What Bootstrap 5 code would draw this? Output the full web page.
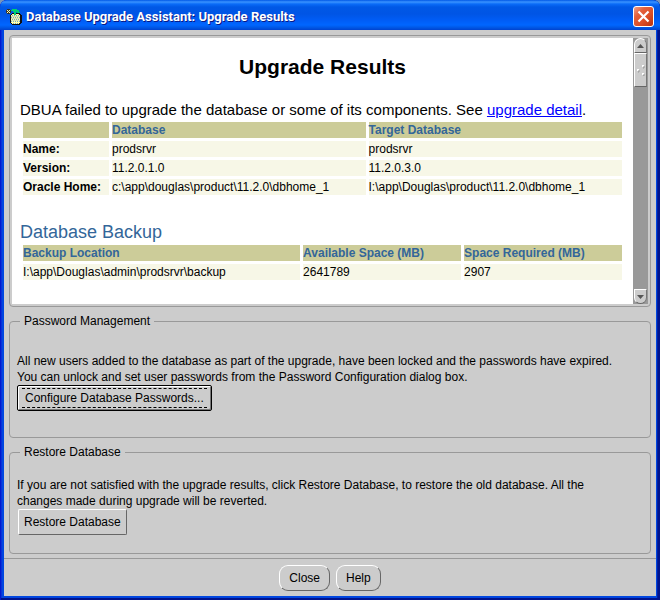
<!DOCTYPE html>
<html lang="en">
<head>
<meta charset="utf-8">
<meta name="viewport" content="width=device-width, initial-scale=1">
<title>Database Upgrade Assistant: Upgrade Results</title>
<link href="https://cdn.jsdelivr.net/npm/bootstrap@5.3.0/dist/css/bootstrap.min.css" rel="stylesheet">
<style>
  body { background: #7a96b8; font: 12px/16px "Liberation Sans", Arial, sans-serif; color: #000; }
  .app-window { background: #0046e0; border-radius: 7px 7px 0 0; overflow: hidden;
    padding: 0 4px 4px; box-shadow: inset 1px 0 #0019cf, inset -2px 0 #00138c, inset 0 -2px #00138c, inset 2px 0 #0831d9, inset -3px 0 #001ea0; }
  .title-bar { height: 30px; margin: 0 -4px; padding: 3px 6px 0 6px; color: #fff;
    background: linear-gradient(#0058e6 0, #3a93ff 2px, #0a6cf8 4px, #0058e6 7px, #0055e5 14px, #005cf5 20px, #0066ff 25px, #005bea 27px, #0043cf 30px); }
  .title-bar h1 { font: bold 13px/18px Roboto, sans-serif; text-shadow: 1px 1px #0a1883; }
  .close-x { width: 21px; height: 21px; border: 1px solid #fff; border-radius: 3px;
    background: linear-gradient(135deg, #f0a088 0, #e3603c 30%, #dd4f28 60%, #b93210 100%); }
  .client { background: #ccc; }
  .report { margin: 5px 5px 6px; border: 1px solid #999; border-radius: 4px; padding: 2px; }
  .page { background: #fff; padding: 16px 8px 0; }
  .page h2 { font-size: 21px; line-height: 26px; font-weight: bold; margin-bottom: 21px; }
  .page p { font-size: 15px; line-height: 18px; margin: 0; }
  .page a { color: #00f; }
  .page h3 { font-size: 18px; line-height: 19px; color: #369; margin: 25px 0 0; font-weight: 400; }
  .grid-table { width: 100%; border-collapse: separate; border-spacing: 3px; table-layout: fixed; }
  .grid-table th, .grid-table td { padding: 0; height: 16px; background: #f7f7e7; line-height: 16px; }
  .grid-table thead th { background: #cc9; color: #369; }
  .grid-table .c-label { width: 86px; }
  .grid-table .c-space { width: 158px; }
  .scroll-track { width: 15px; background: #999; }
  .scroll-btn { height: 15px; background: #ccc; border: 1px solid #fff; border-right-color: #777; border-bottom-color: #666; margin: 0 1px; }
  .scroll-up { border-radius: 7px 7px 0 0; }
  .scroll-down { border-radius: 0 0 7px 7px; }
  .thumb { height: 34px; background: #ccc; border: 1px solid #fff; border-right-color: #777; border-bottom-color: #666; margin: 0 1px; }
  .group { margin: 0 5px; border: 1px solid #999; border-radius: 4px; padding: 0 7px; }
  .group legend { font-size: 12px; line-height: 16px; margin: 0 0 0 3px; padding: 0 4px; }
  .g-pass { padding-bottom: 26px; margin-bottom: 6px; }
  .g-pass p { margin: 24px 0 0; }
  .g-rest { padding-bottom: 18px; margin-bottom: 4px; }
  .g-rest p { margin: 17px 0 0; }
  .push { background: #ccc; color: #000; border: 1px solid #fff; border-right-color: #666; border-bottom-color: #666; border-radius: 2px; font-size: 12px; line-height: 16px; padding: 4px; }
  .push-rest { margin-left: 1px; padding: 4px 5px; }
  .push-main { border-color: #000; padding: 2px 4px; box-shadow: inset 1px 1px #fff, inset -1px -1px #777; }
  .push-main span { display: block; border: dashed #000; border-width: 1px 0; padding: 1px 3px; }
  .push-round { border-radius: 9px; padding: 4px 9px; }
  .foot { border-top: 1px solid #999; padding: 6px 0 5px; gap: 6px; }
</style>
</head>
<body>
<div class="app-window min-vh-100 d-flex flex-column">
  <header class="title-bar d-flex align-items-center">
    <svg width="16" height="16" viewBox="0 0 16 16" shape-rendering="crispEdges" aria-hidden="true">
      <path fill="#111" d="M6 4h8v1h1v1h1v8h-1v1h-1v1H6v-1H5v-1H4V6h1V5h1z"/>
      <path fill="#ffffa8" d="M6 5h7v1h1v8h-1v1H6v-1H5V6h1z"/>
      <path fill="#70a8c8" d="M6 6h1v1H6zM8 6h1v1H8zM10 6h1v1h-1zM12 6h1v1h-1zM5 8h1v1H5zM7 8h1v1H7zM9 8h1v1H9zM11 8h1v1h-1zM13 8h1v1h-1zM6 10h1v1H6zM8 10h1v1H8zM10 10h1v1h-1zM12 10h1v1h-1zM5 12h1v1H5zM7 12h1v1H7zM9 12h1v1H9zM11 12h1v1h-1zM13 12h1v1h-1zM7 14h1v1H7zM9 14h1v1H9zM11 14h1v1h-1z"/>
      <path fill="#b8c8b8" d="M5 7h9v1H5zM5 9h9v1H5zM5 11h9v1H5z" opacity=".5"/>
      <path fill="#00d070" d="M6 0h5v1h2v2h1v1h-3V3h-1v3H8V3H7V2H5V1h1z"/>
      <path fill="#333" d="M1 0h3v1h1v3H4v1H1V4H0V1h1z"/>
      <path fill="#ffffb0" d="M1 1h1v1H1zM3 1h1v1H3zM2 2h1v1H2zM1 3h1v1H1zM3 3h1v1H3z"/>
    </svg>
    <h1 class="mb-0 ms-1 flex-grow-1">Database Upgrade Assistant: Upgrade Results</h1>
    <button class="close-x p-0 d-flex align-items-center justify-content-center" type="button" aria-label="Close window">
      <svg width="13" height="13" viewBox="0 0 13 13" aria-hidden="true"><path d="M1.500 1.500l10 10M11.500 1.500l-10 10" stroke="#fff" stroke-width="2.200"/></svg>
    </button>
  </header>
  <main class="client flex-grow-1 d-flex flex-column">
    <section class="report flex-grow-1 d-flex">
      <div class="page flex-grow-1">
        <h2 class="text-center">Upgrade Results</h2>
        <p>DBUA failed to upgrade the database or some of its components. See <a href="#">upgrade detail</a>.</p>
        <table class="grid-table">
          <thead><tr><th class="c-label"></th><th scope="col">Database</th><th scope="col">Target Database</th></tr></thead>
          <tbody>
            <tr><th scope="row">Name:</th><td>prodsrvr</td><td>prodsrvr</td></tr>
            <tr><th scope="row">Version:</th><td>11.2.0.1.0</td><td>11.2.0.3.0</td></tr>
            <tr><th scope="row">Oracle Home:</th><td>c:\app\douglas\product\11.2.0\dbhome_1</td><td>I:\app\Douglas\product\11.2.0\dbhome_1</td></tr>
          </tbody>
        </table>
        <h3>Database Backup</h3>
        <table class="grid-table">
          <thead><tr><th scope="col">Backup Location</th><th class="c-space" scope="col">Available Space (MB)</th><th class="c-space" scope="col">Space Required (MB)</th></tr></thead>
          <tbody><tr><td>I:\app\Douglas\admin\prodsrvr\backup</td><td>2641789</td><td>2907</td></tr></tbody>
        </table>
      </div>
      <div class="scroll-track d-flex flex-column flex-shrink-0">
        <button class="scroll-btn scroll-up p-0 d-flex align-items-center justify-content-center" type="button" aria-label="Scroll up">
          <svg width="7" height="4" viewBox="0 0 7 4" aria-hidden="true"><path d="M0 4l3.500-4L7 4z" fill="#555"/></svg>
        </button>
        <div class="thumb d-flex align-items-center justify-content-center">
          <svg width="9" height="11" viewBox="0 0 9 11" aria-hidden="true"><g fill="#fff"><path d="M6 0h2v2H6zM1 4h2v2H1zM6 8h2v2H6z"/></g><path d="M8 1v2H7M3 5v2H2M8 9v2H7" fill="none" stroke="#999"/></svg>
        </div>
        <button class="scroll-btn scroll-down mt-auto p-0 d-flex align-items-center justify-content-center" type="button" aria-label="Scroll down">
          <svg width="7" height="4" viewBox="0 0 7 4" aria-hidden="true"><path d="M0 0h7L3.500 4z" fill="#555"/></svg>
        </button>
      </div>
    </section>
    <fieldset class="group g-pass">
      <legend class="float-none w-auto">Password Management</legend>
      <p>All new users added to the database as part of the upgrade, have been locked and the passwords have expired.<br>You can unlock and set user passwords from the Password Configuration dialog box.</p>
      <button class="push push-main" type="button"><span>Configure Database Passwords...</span></button>
    </fieldset>
    <fieldset class="group g-rest">
      <legend class="float-none w-auto">Restore Database</legend>
      <p>If you are not satisfied with the upgrade results, click Restore Database, to restore the old database. All the<br>changes made during upgrade will be reverted.</p>
      <button class="push push-rest" type="button">Restore Database</button>
    </fieldset>
    <footer class="foot d-flex justify-content-center">
      <button class="push push-round" type="button">Close</button>
      <button class="push push-round" type="button">Help</button>
    </footer>
  </main>
</div>
<script src="https://cdn.jsdelivr.net/npm/bootstrap@5.3.0/dist/js/bootstrap.bundle.min.js"></script>
</body>
</html>
